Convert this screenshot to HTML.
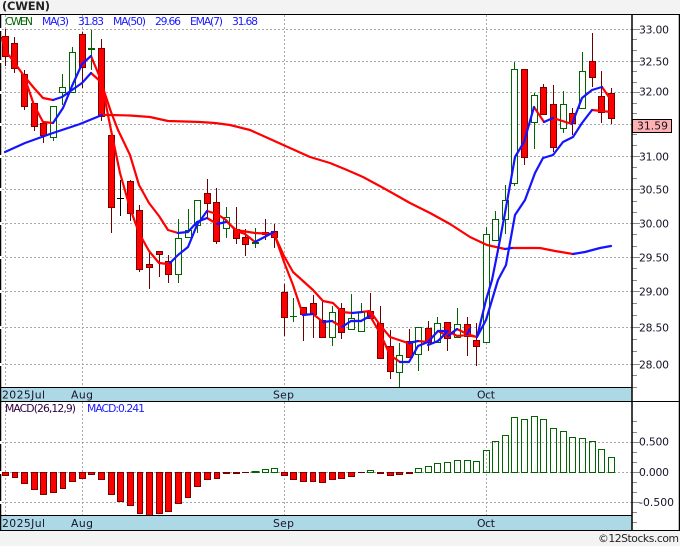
<!DOCTYPE html>
<html><head><meta charset="utf-8"><style>
html,body{margin:0;padding:0;background:#f3f3f3}
svg{display:block}
text{font-family:"DejaVu Sans","Liberation Sans",sans-serif;font-size:10.8px}
</style></head><body>
<svg width="680" height="546" viewBox="0 0 680 546" xmlns="http://www.w3.org/2000/svg">
<rect width="680" height="546" fill="#f3f3f3"/>
<rect x="0" y="14" width="680" height="516" fill="#fff"/>
<rect x="1" y="388" width="631" height="13" fill="#add8e6"/>
<rect x="1" y="516" width="631" height="14" fill="#add8e6"/>
<!-- grid -->
<g stroke="#a8a8a8" stroke-width="1" stroke-dasharray="2 2" fill="none">
<path d="M2 29.5H632M2 61.5H632M2 92.5H632M2 124.5H632M2 156.5H632M2 189.5H632M2 223.5H632M2 257.5H632M2 291.5H632M2 327.5H632M2 364.5H632"/>
<path d="M2 442.5H632M2 472.5H632M2 502.5H632"/>
<path d="M5.5 15V387M82.5 15V387M284.5 15V387M486.5 15V387"/>
<path d="M5.5 402V515M82.5 402V515M284.5 402V515M486.5 402V515"/>
</g>
<!-- wicks -->
<path fill="none" stroke="#6a0000" stroke-width="1" d="M5.5 29V66M14.5 37V73M24.5 70V110M34.5 103V131M43.5 123V143M82.5 32V88M101.5 39V121M111.5 135V233M130.5 180V221M139.5 205V272M149.5 253V289M159.5 251V277M168.5 255V283M207.5 179V218M216.5 188V244M236.5 207V244M245.5 229V256M265.5 219V240M274.5 224V248M284.5 284V336M303.5 307V341M313.5 295V338M322.5 302V337M341.5 303V339M370.5 293V318M380.5 306V358M390.5 330V379M409.5 329V357M428.5 321V351M447.5 322V351M467.5 317V356M476.5 323V366M524.5 69V165M543.5 84V114M553.5 85V152M572.5 108V135M592.5 33V87M601.5 71V123M611.5 88V124"/>
<path fill="none" stroke="#006400" stroke-width="1" d="M53.5 106V141M62.5 74V105M72.5 47V92M91.5 30V70M178.5 219V283M188.5 209V237M197.5 200V233M226.5 207V238M255.5 228V248M293.5 298V322M332.5 306V346M351.5 294V329M361.5 303V331M399.5 343V387M418.5 327V371M437.5 317V342M457.5 308V337M486.5 227V342M495.5 211V240M505.5 185V234M514.5 62V186M534.5 93V149M563.5 91V133M582.5 52V108"/>
<path fill="none" stroke="#000" stroke-width="1" d="M120.5 180V216M117 198.5H124"/>
<!-- dojis -->
<path fill="none" stroke="#006400" stroke-width="2" d="M88 49H95M252 243H259"/>
<path fill="none" stroke="#006400" stroke-width="1" d="M290 316.5H297"/>
<!-- green bodies -->
<path fill="#fff" stroke="#006400" stroke-width="1" d="M50.5 106.5h6v31h-6zM59.5 87.5h6v5h-6zM69.5 52.5h6v40h-6zM175.5 238.5h6v36h-6zM185.5 230.5h6v7h-6zM194.5 200.5h6v25h-6zM223.5 217.5h6v11h-6zM329.5 312.5h6v25h-6zM348.5 318.5h6v11h-6zM358.5 312.5h6v19h-6zM396.5 355.5h6v17h-6zM415.5 327.5h6v27h-6zM434.5 323.5h6v19h-6zM454.5 324.5h6v13h-6zM483.5 234.5h6v108h-6zM492.5 219.5h6v21h-6zM502.5 200.5h6v19h-6zM511.5 69.5h6v114h-6zM531.5 95.5h6v27h-6zM560.5 104.5h6v24h-6zM579.5 71.5h6v37h-6z"/>
<!-- red bodies -->
<path fill="#f00" stroke="#7a0000" stroke-width="1" d="M2.5 36.5h6v20h-6zM11.5 43.5h6v25h-6zM21.5 74.5h6v32h-6zM31.5 103.5h6v23h-6zM40.5 123.5h6v12h-6zM79.5 34.5h6v33h-6zM98.5 48.5h6v68h-6zM108.5 135.5h6v72h-6zM127.5 181.5h6v32h-6zM136.5 210.5h6v59h-6zM146.5 264.5h6v3h-6zM156.5 251.5h6v3h-6zM165.5 261.5h6v13h-6zM204.5 193.5h6v10h-6zM213.5 202.5h6v39h-6zM233.5 229.5h6v9h-6zM242.5 237.5h6v7h-6zM262.5 232.5h6v2h-6zM271.5 231.5h6v6h-6zM281.5 292.5h6v25h-6zM300.5 307.5h6v7h-6zM310.5 303.5h6v11h-6zM319.5 320.5h6v17h-6zM338.5 308.5h6v24h-6zM367.5 311.5h6v7h-6zM377.5 323.5h6v35h-6zM387.5 346.5h6v25h-6zM406.5 341.5h6v16h-6zM425.5 328.5h6v14h-6zM444.5 322.5h6v16h-6zM464.5 324.5h6v12h-6zM473.5 340.5h6v6h-6zM521.5 69.5h6v88h-6zM540.5 87.5h6v27h-6zM550.5 104.5h6v43h-6zM569.5 113.5h6v10h-6zM589.5 61.5h6v16h-6zM598.5 96.5h6v16h-6zM608.5 93.5h6v25h-6z"/>
<!-- MA lines -->
<g fill="none" stroke-width="2.2" stroke-linejoin="round" stroke-linecap="round">
<path stroke="#f00" d="M2 38L5 50L14 62L24 76L34 88L43 98L53 100M14 62L24 76L34 105L43 122L53 123M91 56L101 80L111 130L120 173L130 208L139 233L149 251L159 263L168 264M91 73L101 82L111 112L118 130L130 155L139 185L149 203L159 216L168 230L178 233M207 211L217 214L226 220L236 231L245 234L255 242M207 218L217 224M226 221L236 230L255 233L274 234L284 256L293 272L303 281L313 290L323 301L333 303L342 312L352 313M274 233L284 262L293 285L303 315M313 314L323 322M332 321L342 327M351 321L361 321M362 312L370 311L380 325L390 337L408 343M370 316L380 333L390 355L400 362M418 341L428 342M438 341L448 331L457 336L467 335L477 337M438 331L448 336L457 329L467 334L477 337M534 107L544 122M553 118L572 124M602 87L611 100M592 110L602 111L611 112"/>
<path stroke="#f00" d="M102 115L110 115L130 115.5L150 117L168 121L185 121.5L200 122L215 123L230 125L250 130L270 139L290 148L310 157L330 163L347 170L363 177L387 190L410 203L430 213L450 224L470 237L487 245L505 249M512 248L540 248L555 251L573 254"/>
<path stroke="#1414ff" d="M53 123L63 108L72 86L82 64L91 56M53 100L62 97L72 90L82 83L91 73M170 263L178 255L188 247L197 225L207 211M178 233L188 232L197 222L207 218M217 224L226 222M255 242L274 232M303 315L313 314M323 322L332 321M342 327L351 321L361 321L370 316M352 313L362 312M400 362L409 362L418 346L428 342L438 331L448 331M409 343L418 341M428 345L438 341L448 331M448 336L457 329M467 334L470 329M477 337L486 300L492 280L498 250L505 213L515 157L524 142L534 107M477 337L486 320L498 280L506 265L515 215L525 200L535 173L543 158L553 155L563 142L573 137L582 123L592 110M544 122L553 118M572 124L582 98L592 90L602 87"/>
<path stroke="#1414ff" d="M5 152L25 143L50 134L80 124L102 115M505 249L512 248M573 254L585 252L600 248L611 246"/>
</g>
<!-- MACD red -->
<path fill="#f00" stroke="#7a0000" stroke-width="1" d="M2.5 472.5h6v3h-6zM12.5 472.5h5v5h-5zM21.5 472.5h6v11h-6zM31.5 472.5h6v17h-6zM40.5 472.5h6v22h-6zM50.5 472.5h6v20h-6zM60.5 472.5h5v16h-5zM69.5 472.5h6v9h-6zM79.5 472.5h6v6h-6zM88.5 472.5h6v2h-6zM98.5 472.5h6v7h-6zM108.5 472.5h6v22h-6zM117.5 472.5h6v29h-6zM127.5 472.5h6v33h-6zM137.5 472.5h5v41h-5zM146.5 472.5h6v43h-6zM156.5 472.5h6v41h-6zM165.5 472.5h6v39h-6zM175.5 472.5h6v31h-6zM185.5 472.5h5v25h-5zM194.5 472.5h6v14h-6zM204.5 472.5h6v7h-6zM214.5 472.5h5v6h-5zM233.5 472.5h6v1h-6zM223.5 472.5h6v1h-6zM281.5 472.5h6v3h-6zM290.5 472.5h6v7h-6zM300.5 472.5h6v9h-6zM310.5 472.5h5v9h-5zM319.5 472.5h6v10h-6zM329.5 472.5h6v7h-6zM338.5 472.5h6v6h-6zM348.5 472.5h6v4h-6zM377.5 472.5h6v1h-6zM387.5 472.5h6v3h-6zM396.5 472.5h6v2h-6zM406.5 472.5h6v1h-6z"/>
<path fill="none" stroke="#6a0000" stroke-width="1" d="M242 472.5h7M358 472.5h7"/>
<!-- MACD green -->
<path fill="none" stroke="#006400" stroke-width="1" d="M252 471.5h7v1h-7zM262.5 469.5h6v3h-6zM271.5 468.5h6v4h-6zM367.5 470.5h6v2h-6zM415.5 468.5h6v4h-6zM425.5 466.5h6v6h-6zM434.5 463.5h6v9h-6zM444.5 462.5h6v10h-6zM454.5 460.5h6v12h-6zM464.5 460.5h6v12h-6zM473.5 461.5h6v11h-6zM483.5 450.5h6v22h-6zM492.5 441.5h6v31h-6zM502.5 435.5h6v37h-6zM511.5 417.5h6v55h-6zM521.5 419.5h6v53h-6zM531.5 416.5h6v56h-6zM540.5 419.5h6v53h-6zM550.5 428.5h6v44h-6zM560.5 431.5h6v41h-6zM569.5 437.5h6v35h-6zM579.5 438.5h6v34h-6zM589.5 441.5h6v31h-6zM598.5 449.5h6v23h-6zM608.5 457.5h6v15h-6z"/>
<!-- axis ticks -->
<path fill="none" stroke="#8a8a8a" stroke-width="1" d="M632 29.5h8M632 61.5h8M632 92.5h8M632 124.5h8M632 156.5h8M632 189.5h8M632 223.5h8M632 257.5h8M632 291.5h8M632 327.5h8M632 364.5h8M632 39.5h5M632 50.5h5M632 71.5h5M632 82.5h5M632 103.5h5M632 113.5h5M632 134.5h5M632 145.5h5M632 167.5h5M632 178.5h5M632 201.5h5M632 212.5h5M632 234.5h5M632 246.5h5M632 268.5h5M632 280.5h5M632 303.5h5M632 315.5h5M632 339.5h5M632 351.5h5M632 375.5h5M632 387.5h5M632 421.5h5M632 432.5h5M632 442.5h8M632 452.5h5M632 462.5h5M632 472.5h8M632 482.5h5M632 492.5h5M632 502.5h8M632 512.5h5M632 522.5h5"/>
<!-- frame -->
<path fill="none" stroke="#000" stroke-width="1" d="M0 14.5H680M0 387.5H632M0 401.5H680M0 515.5H632M0 530.5H680"/>
<path fill="none" stroke="#000" stroke-width="1.5" d="M632 14V530M679.5 14V530"/>
<path fill="none" stroke="#000" stroke-width="1.5" d="M.5 14V28M.5 31V60M.5 63V91M.5 94V123M.5 126V155M.5 158V188M.5 191V222M.5 225V256M.5 259V290M.5 293V326M.5 329V363M.5 366V401M.5 401V441M.5 444V471M.5 474V501M.5 504V530"/>
<!-- price box -->
<rect x="632.5" y="119.5" width="39" height="13" fill="#ffb0b0" stroke="#000"/>
<!-- text -->
<text x="2" y="10" font-weight="bold" style="font-size:11.5px" fill="#222" textLength="48">(CWEN)</text>
<g fill="#1a1aff">
<text x="5" y="25" fill="#006400" textLength="28">CWEN</text>
<text x="42" y="25" textLength="27">MA(3)</text>
<text x="78" y="25" textLength="26">31.83</text>
<text x="113" y="25" textLength="33">MA(50)</text>
<text x="155" y="25" textLength="26">29.66</text>
<text x="190" y="25" textLength="33">EMA(7)</text>
<text x="232" y="25" textLength="26">31.68</text>
</g>
<g fill="#15152a">
<text x="639" y="33.5" textLength="30">33.00</text>
<text x="639" y="65.5" textLength="30">32.50</text>
<text x="639" y="95.5" textLength="30">32.00</text>
<text x="637" y="129.5" textLength="31">31.59</text>
<text x="639" y="160.5" textLength="30">31.00</text>
<text x="639" y="193.5" textLength="30">30.50</text>
<text x="639" y="227.5" textLength="30">30.00</text>
<text x="639" y="261.5" textLength="30">29.50</text>
<text x="639" y="295.5" textLength="30">29.00</text>
<text x="639" y="331.5" textLength="30">28.50</text>
<text x="639" y="368.5" textLength="30">28.00</text>
<text x="639" y="445.5" textLength="30">0.500</text>
<text x="639" y="476" textLength="30">0.000</text>
<text x="639" y="506" textLength="35">-0.500</text>
<text x="2" y="398.5" textLength="43">2025Jul</text>
<text x="71" y="398.5" textLength="22">Aug</text>
<text x="273" y="398.5" textLength="21">Sep</text>
<text x="477" y="398.5" textLength="18">Oct</text>
<text x="2" y="527" textLength="43">2025Jul</text>
<text x="71" y="527" textLength="22">Aug</text>
<text x="273" y="527" textLength="21">Sep</text>
<text x="477" y="527" textLength="18">Oct</text>
<text x="5" y="412" fill="#300040" textLength="71">MACD(26,12,9)</text>
<text x="87" y="412" fill="#1a1aff" textLength="58">MACD:0.241</text>
<text x="598" y="542" fill="#222" textLength="81">©12Stocks.com</text>
</g>
</svg>
</body></html>
